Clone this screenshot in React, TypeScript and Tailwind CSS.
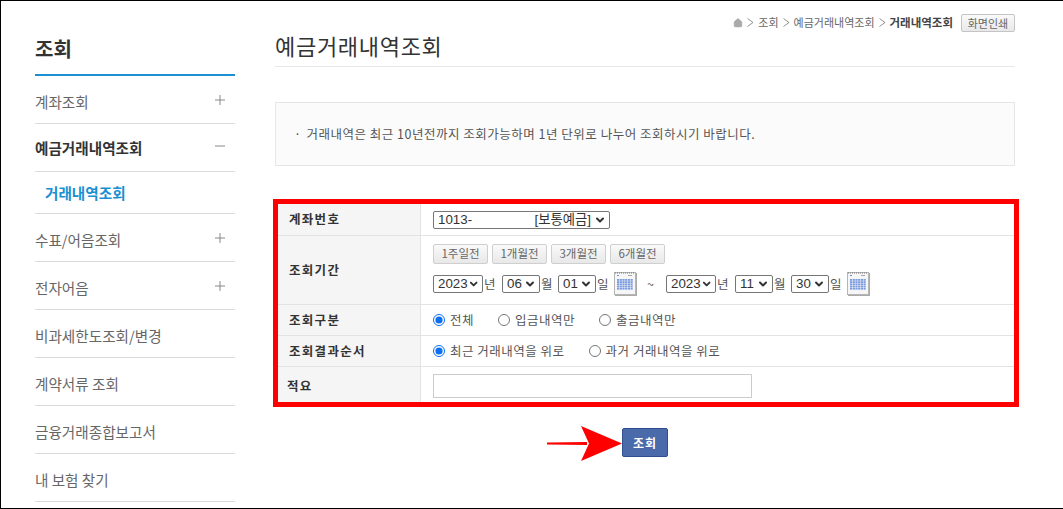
import { useState } from 'react'
import { ChevronDown, Home } from 'lucide-react'

const font = 'font-["Noto_Sans_CJK_KR","Noto_Sans",sans-serif]'
const selFont = 'font-["Liberation_Sans","Noto_Sans_CJK_KR",sans-serif]'

const menu = [
  { label: '계좌조회', icon: '+' },
  { label: '예금거래내역조회', icon: '-', active: true },
  { label: '거래내역조회', sub: true },
  { label: '수표/어음조회', icon: '+' },
  { label: '전자어음', icon: '+' },
  { label: '비과세한도조회/변경' },
  { label: '계약서류 조회' },
  { label: '금융거래종합보고서' },
  { label: '내 보험 찾기' },
]

function Sidebar() {
  return (
    <aside className="w-[200px] shrink-0">
      <h2 className="h-[73px] pt-[33px] text-[20px] leading-[30px] font-bold text-[#333]">조회</h2>
      <div className="h-[2px] bg-[#1a8fd1]" />
      <ul>
        {menu.map((m) => (
          <li
            key={m.label}
            className={`flex items-center justify-between border-b border-[#dcdcdc] ${
              m.sub ? 'h-[42px] pl-[10px]' : m.active ? 'h-[48px] pr-[10px] pt-[1px]' : 'h-[48px] pr-[10px] pt-[4px]'
            }`}
          >
            <span
              className={`text-[14.6px] ${
                m.sub ? 'font-bold text-[#1a8fd1]' : m.active ? 'font-bold text-[#333]' : 'text-[#666]'
              }`}
            >
              {m.label}
            </span>
            {m.icon && (
              <svg width="10" height="10" viewBox="0 0 10 10" className="mb-[4px] text-[#888]">
                <path d="M0 5h10" stroke="currentColor" />
                {m.icon === '+' && <path d="M5 0v10" stroke="currentColor" />}
              </svg>
            )}
          </li>
        ))}
      </ul>
    </aside>
  )
}

function Sel({ value, wide }: { value: string; wide?: boolean }) {
  return (
    <span
      className={`${selFont} inline-flex h-[18px] items-center justify-between rounded-[2px] border border-[#767676] bg-white pl-[4px] pr-[3px] text-[13.33px] text-[#333] ${
        wide ? 'w-[50px]' : 'w-[38px]'
      }`}
    >
      {value}
      <ChevronDown size={12} strokeWidth={4} className="text-[#333]" />
    </span>
  )
}

function Calendar() {
  return (
    <svg width="23" height="24" viewBox="0 0 23 24">
      <rect x="1" y="1" width="22" height="23" fill="#aaa" />
      <rect x="0.5" y="0.5" width="21" height="22" fill="#f6f6f6" stroke="#b5b5b5" />
      <path d="M1 1h20" stroke="#777" strokeDasharray="1 1" />
      <rect x="3" y="3" width="2" height="1" fill="#6f8fd0" />
      <rect x="14" y="3" width="4" height="1" fill="#aaa" />
      <g fill="#7b9be0">
        {[7, 9.2, 11.4, 13.6, 15.8].map((y) =>
          [3, 5.7, 8.4, 11.1, 13.8, 16.5].map((x) => <rect key={`${x}-${y}`} x={x} y={y} width="2.2" height="1.8" />),
        )}
      </g>
    </svg>
  )
}

function Row({ label, h, children, last }: { label: string; h: string; children: React.ReactNode; last?: boolean }) {
  return (
    <div className={`flex ${h} ${last ? '' : 'border-b border-[#e3e3e3]'}`}>
      <div
        className={`flex w-[143px] items-center border-r border-[#e3e3e3] bg-[#f5f5f5] text-[12.5px] font-bold tracking-[1.3px] text-[#333] ${
          last ? 'pl-[9px] pt-[3px]' : 'pl-[11px]'
        }`}
      >
        {label}
      </div>
      <div className="flex flex-1 flex-col justify-center pl-[12px] text-[12.5px] text-[#555]">{children}</div>
    </div>
  )
}

function Radio({ label, on, name, onPick }: { label: string; on: boolean; name: string; onPick: () => void }) {
  return (
    <label className="flex items-center gap-[5px]">
      <input type="radio" name={name} checked={on} onChange={onPick} className="m-0 h-[12px] w-[12px] accent-[#0b6ff0]" />
      <span className="tracking-[0.5px]">{label}</span>
    </label>
  )
}

function DateGroup({ d }: { d: string[] }) {
  return (
    <div className="flex items-center">
      <Sel value={d[0]} wide />
      <span className="ml-[1px] mr-[6px] w-[12px]">년</span>
      <Sel value={d[1]} />
      <span className="ml-[1px] mr-[6px] w-[11px]">월</span>
      <Sel value={d[2]} />
      <span className="ml-[1px] mr-[6px] w-[11px]">일</span>
      <Calendar />
    </div>
  )
}

function Sep() {
  return (
    <svg width="7" height="9" viewBox="0 0 7 9" className="mx-[4px] text-[#777]">
      <path d="M0.5 0.5 6 4.5 0.5 8.5" fill="none" stroke="currentColor" strokeWidth="0.8" />
    </svg>
  )
}

export default function App() {
  const [kind, setKind] = useState(0)
  const [order, setOrder] = useState(0)

  return (
    <div className={`${font} flex h-[509px] w-[1063px] gap-[40px] overflow-hidden border-y border-l border-black bg-white pl-[34px]`}>
      <Sidebar />

      <main className="w-[740px] shrink-0">
        <div className="mt-[12px] flex h-[19px] items-center justify-end text-[11px] text-[#666]">
          <Home size={10} fill="#aaa" className="text-[#aaa]" />
          <Sep />
          <span>조회</span>
          <Sep />
          <span>예금거래내역조회</span>
          <Sep />
          <b className="text-[11.5px] text-[#444]">거래내역조회</b>
          <button className="ml-[8px] h-[18px] w-[54px] rounded-[2px] border border-[#c4c4c4] bg-gradient-to-b from-[#fafafa] to-[#e8e8e8] text-[11px] text-[#666]">
            화면인쇄
          </button>
        </div>

        <h1 className="h-[35px] border-b border-[#e8e8e8] text-[22px] leading-[26px] tracking-[0.7px] text-[#333]">예금거래내역조회</h1>

        <div className="mt-[35px] flex h-[64px] items-center border border-[#e6e6e6] bg-[#fbfbfb] pl-[18px] text-[12.5px] tracking-[0.5px] text-[#555]">
          <span className="mr-[5px]">·</span>
          거래내역은 최근 10년전까지 조회가능하며 1년 단위로 나누어 조회하시기 바랍니다.
        </div>

        <section className="ml-[-2px] mr-[-4px] mt-[33px] border-[5px] border-[#ff0000]">
          <Row label="계좌번호" h="h-[32px]">
            <span className={`${selFont} inline-flex h-[18px] w-[177px] items-center justify-between rounded-[2px] border border-[#767676] pl-[4px] pr-[3px] text-[13.33px] text-[#333]`}>
              <span>1013-</span>
              <span className="ml-auto mr-[3px]">[보통예금]</span>
              <ChevronDown size={12} strokeWidth={4} />
            </span>
          </Row>
          <Row label="조회기간" h="h-[69px]">
            <div className="flex gap-[4px]">
              {['1주일전', '1개월전', '3개월전', '6개월전'].map((t) => (
                <button
                  key={t}
                  className="h-[20px] w-[55px] rounded-[2px] border border-[#cfcfcf] bg-gradient-to-b from-[#fafafa] to-[#e8e8e8] text-[11.5px] text-[#666]"
                >
                  {t}
                </button>
              ))}
            </div>
            <div className="mt-[8px] flex items-center">
              <DateGroup d={['2023', '06', '01']} />
              <span className="ml-[10px] mr-[12px] w-[7px]">~</span>
              <DateGroup d={['2023', '11', '30']} />
            </div>
          </Row>
          <Row label="조회구분" h="h-[31px]">
            <div className="flex gap-[24px]">
              {['전체', '입금내역만', '출금내역만'].map((t, i) => (
                <Radio key={t} name="kind" label={t} on={kind === i} onPick={() => setKind(i)} />
              ))}
            </div>
          </Row>
          <Row label="조회결과순서" h="h-[31px]">
            <div className="flex gap-[24px]">
              {['최근 거래내역을 위로', '과거 거래내역을 위로'].map((t, i) => (
                <Radio key={t} name="order" label={t} on={order === i} onPick={() => setOrder(i)} />
              ))}
            </div>
          </Row>
          <Row label="적요" h="h-[35px]" last>
            <input className="mt-[2px] h-[24px] w-[319px] shrink-0 border border-[#cccccc] bg-white outline-none" />
          </Row>
        </section>

        <div className="relative mt-[21px] flex justify-center">
          <svg width="76" height="36" viewBox="0 0 76 36" className="absolute left-[272px] top-[-2px]">
            <path d="M0 16.5 40 16V19L0 18.5z" fill="#f00" />
            <path d="M34 0 75 17.5 34 35 42 17.5z" fill="#f00" />
          </svg>
          <button className="h-[29px] w-[46px] rounded-[2px] border border-[#2f4f8f] bg-[#4a6aa9] text-[12px] font-bold tracking-[1px] text-white">
            조회
          </button>
        </div>
      </main>
    </div>
  )
}
